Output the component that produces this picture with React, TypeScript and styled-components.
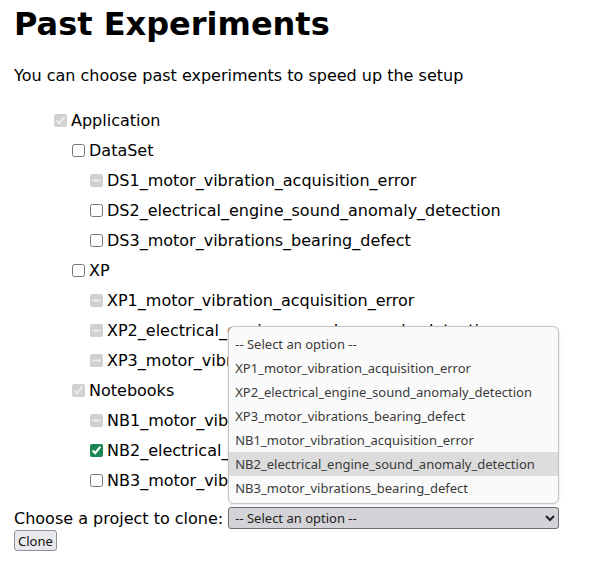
import { useEffect, useRef } from "react";
import styled, { createGlobalStyle } from "styled-components";

const GlobalStyle = createGlobalStyle`
  body {
    margin: 0;
    font-family: "DejaVu Sans", sans-serif;
    color: #000;
    background: #fff;
  }
`;

interface TreeNode {
  label: string;
  depth: number;
  checked?: boolean;
  indeterminate?: boolean;
  disabled?: boolean;
}

const TREE: Array<TreeNode> = [
  { label: "Application", depth: 0, checked: true, disabled: true },
  { label: "DataSet", depth: 1 },
  { label: "DS1_motor_vibration_acquisition_error", depth: 2, indeterminate: true, disabled: true },
  { label: "DS2_electrical_engine_sound_anomaly_detection", depth: 2 },
  { label: "DS3_motor_vibrations_bearing_defect", depth: 2 },
  { label: "XP", depth: 1 },
  { label: "XP1_motor_vibration_acquisition_error", depth: 2, indeterminate: true, disabled: true },
  { label: "XP2_electrical_engine_sound_anomaly_detection", depth: 2, indeterminate: true, disabled: true },
  { label: "XP3_motor_vibrations_bearing_defect", depth: 2, indeterminate: true, disabled: true },
  { label: "Notebooks", depth: 1, checked: true, disabled: true },
  { label: "NB1_motor_vibration_acquisition_error", depth: 2, indeterminate: true, disabled: true },
  { label: "NB2_electrical_engine_sound_anomaly_detection", depth: 2, checked: true },
  { label: "NB3_motor_vibrations_bearing_defect", depth: 2 },
];

const OPTIONS = [
  "-- Select an option --",
  "XP1_motor_vibration_acquisition_error",
  "XP2_electrical_engine_sound_anomaly_detection",
  "XP3_motor_vibrations_bearing_defect",
  "NB1_motor_vibration_acquisition_error",
  "NB2_electrical_engine_sound_anomaly_detection",
  "NB3_motor_vibrations_bearing_defect",
];

const Page = styled.div`
  padding: 6px 14px 0;
`;

const Title = styled.h1`
  font-size: 32px;
  font-weight: bold;
  margin: 0;
  line-height: 37px;
`;

const Intro = styled.p`
  font-size: 16px;
  margin: 23px 0 0;
  line-height: 19px;
`;

const Tree = styled.ul`
  list-style: none;
  margin: 20px 0 0;
  padding: 0 0 0 40px;
`;

const Row = styled.li<{ $depth: number }>`
  display: flex;
  align-items: center;
  height: 30px;
  padding-left: ${({ $depth }) => $depth * 18}px;
  font-size: 16px;
  white-space: nowrap;
`;

const Box = styled.input`
  width: 13px;
  height: 13px;
  margin: 0 4px 0 0;
  accent-color: #198754;
`;

const CloneForm = styled.div`
  display: flex;
  align-items: center;
  gap: 5px;
  margin-top: 12px;
  font-size: 16px;
`;

const SelectWrap = styled.div`
  position: relative;
`;

const Select = styled.select`
  width: 331px;
  height: 22px;
  font-family: "Noto Sans", sans-serif;
  font-size: 13px;
  color: #222;
  background-color: #d3d3d8;
  border: 1px solid #6c6c72;
  border-radius: 3px;
  padding: 0 2px;
`;

const Popup = styled.ul`
  position: absolute;
  left: 0;
  bottom: calc(100% + 3px);
  width: 331px;
  box-sizing: border-box;
  margin: 0;
  padding: 5px 0 3px;
  list-style: none;
  background: #fafafa;
  border: 1px solid #c4c4c4;
  border-radius: 6px;
  box-shadow: 0 1px 3px rgba(0, 0, 0, 0.12);
  z-index: 2;
`;

const Option = styled.li<{ $active?: boolean }>`
  height: 24px;
  line-height: 24px;
  padding: 0 6px;
  font-family: "Noto Sans", sans-serif;
  font-size: 13px;
  color: #3a3a3a;
  white-space: nowrap;
  background: ${({ $active }) => ($active ? "#dcdcdc" : "transparent")};
`;

const CloneButton = styled.button`
  margin-top: 1px;
  height: 21px;
  padding: 0 3px;
  font-family: "Noto Sans", sans-serif;
  font-size: 13px;
  color: #111;
  background: #e9e9ed;
  border: 1px solid #8f8f9d;
  border-radius: 3px;
`;

const TreeCheckbox: React.FC<{ node: TreeNode }> = ({ node }) => {
  const ref = useRef<HTMLInputElement>(null);
  useEffect(() => {
    if (ref.current) ref.current.indeterminate = !!node.indeterminate;
  }, [node.indeterminate]);
  return (
    <Box
      ref={ref}
      type="checkbox"
      defaultChecked={node.checked}
      disabled={node.disabled}
    />
  );
};

export default function App() {
  return (
    <Page>
      <GlobalStyle />
      <Title>Past Experiments</Title>
      <Intro>You can choose past experiments to speed up the setup</Intro>
      <Tree>
        {TREE.map((node, index) => (
          <Row key={index} $depth={node.depth}>
            <TreeCheckbox node={node} />
            {node.label}
          </Row>
        ))}
      </Tree>
      <CloneForm>
        <span>Choose a project to clone:</span>
        <SelectWrap>
          <Select defaultValue="">
            <option value="">-- Select an option --</option>
            {OPTIONS.slice(1).map((opt) => (
              <option key={opt} value={opt}>
                {opt}
              </option>
            ))}
          </Select>
          <Popup>
            {OPTIONS.map((opt, index) => (
              <Option key={opt} $active={index === 5}>
                {opt}
              </Option>
            ))}
          </Popup>
        </SelectWrap>
      </CloneForm>
      <CloneButton>Clone</CloneButton>
    </Page>
  );
}
